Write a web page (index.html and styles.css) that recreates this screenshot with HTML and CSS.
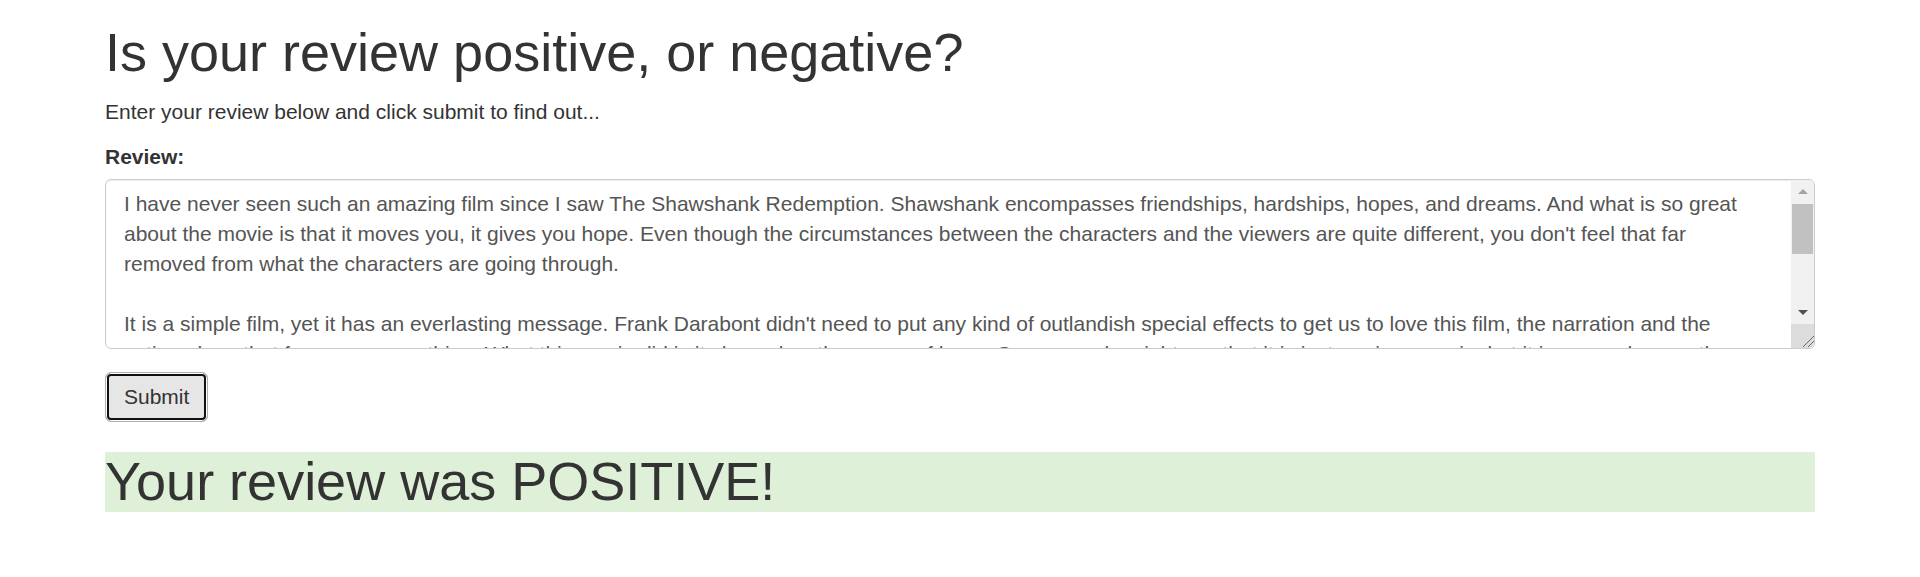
FILE: index.html
```html
<!DOCTYPE html>
<html lang="en">
<head>
<meta charset="utf-8">
<title>Sentiment Analysis</title>
<link rel="stylesheet" href="styles.css">
</head>
<body>
<div class="container">
  <h1 class="title">Is your review positive, or negative?</h1>
  <p class="lead-text">Enter your review below and click submit to find out...</p>
  <form class="review-form">
    <div class="form-group">
      <label class="field-label" for="review">Review:</label>
      <div class="field-wrap">
        <textarea id="review" class="form-control" rows="5">I have never seen such an amazing film since I saw The Shawshank Redemption. Shawshank encompasses friendships, hardships, hopes, and dreams. And what is so great about the movie is that it moves you, it gives you hope. Even though the circumstances between the characters and the viewers are quite different, you don't feel that far removed from what the characters are going through.

It is a simple film, yet it has an everlasting message. Frank Darabont didn't need to put any kind of outlandish special effects to get us to love this film, the narration and the acting alone that far surpass anything. What this movie did is it showed us the power of hope. Some people might say that it is just a prison movie, but it is so much more than that, and this film deserves its place at the top of IMDb's top 250 list.

The performances of Tim Robbins and Morgan Freeman are outstanding. Their friendship feels real from the very first scene to the very last, and you believe every word they say to each other.</textarea>
        <div class="scrollbar" aria-hidden="true">
          <div class="sb-button"><span class="arrow-up"></span></div>
          <div class="sb-track"><div class="sb-thumb"></div></div>
          <div class="sb-button"><span class="arrow-down"></span></div>
          <div class="sb-corner">
            <svg class="grip" width="24" height="24" viewBox="0 0 24 24">
              <line x1="12" y1="23" x2="23" y2="12" stroke="#6b6b6b" stroke-width="1"/>
              <line x1="17" y1="23" x2="23" y2="17" stroke="#6b6b6b" stroke-width="1"/>
            </svg>
          </div>
        </div>
      </div>
    </div>
    <button type="button" class="btn">Submit</button>
  </form>
  <h1 class="result">Your review was POSITIVE!</h1>
</div>
</body>
</html>
```

FILE: styles.css
```css
html, body {
  margin: 0;
  padding: 0;
  background: #fff;
}

body {
  font-family: "Liberation Sans", Arial, Helvetica, sans-serif;
  font-size: 21px;
  line-height: 1.42857;
  color: #333;
}

.container {
  width: 1710px;
  margin: 0 auto;
}

.title,
.result {
  font-family: "Liberation Sans", Arial, Helvetica, sans-serif;
  font-size: 54px;
  font-weight: 500;
  line-height: 1.1;
  color: #333;
  margin: 30px 0 15px;
}

.title {
  margin-top: 23px;
}

.lead-text {
  margin: 0 0 15px;
}

.form-group {
  margin-bottom: 23px;
}

.field-label {
  display: inline-block;
  max-width: 100%;
  margin-bottom: 7px;
  font-weight: 700;
}

.field-wrap {
  position: relative;
}

.form-control {
  display: block;
  box-sizing: border-box;
  width: 100%;
  height: 170px;
  padding: 9px 48px 9px 18px;
  font-family: "Liberation Sans", Arial, Helvetica, sans-serif;
  font-size: 21px;
  line-height: 1.42857;
  color: #555;
  background: #fff;
  border: 1px solid #ccc;
  border-radius: 6px;
  box-shadow: inset 0 1px 1px rgba(0, 0, 0, 0.075);
  resize: none;
  overflow: hidden;
  margin: 0;
}

.scrollbar {
  position: absolute;
  top: 1px;
  right: 1px;
  bottom: 1px;
  width: 23px;
  display: flex;
  flex-direction: column;
  background: #f1f1f1;
  border-radius: 0 5px 5px 0;
  overflow: hidden;
}

.sb-button {
  height: 23px;
  flex: none;
  display: flex;
  align-items: center;
  justify-content: center;
}

.arrow-up {
  width: 0;
  height: 0;
  border-left: 5px solid transparent;
  border-right: 5px solid transparent;
  border-bottom: 5px solid #a3a3a3;
}

.arrow-down {
  width: 0;
  height: 0;
  border-left: 5px solid transparent;
  border-right: 5px solid transparent;
  border-top: 5px solid #505050;
}

.sb-track {
  flex: 1;
  padding: 1px 1px 0;
}

.sb-thumb {
  height: 50px;
  background: #c1c1c1;
}

.sb-corner {
  height: 24px;
  flex: none;
  background: #dcdcdc;
  position: relative;
}

.grip {
  display: block;
}

.btn {
  display: inline-block;
  box-sizing: border-box;
  margin: 0;
  padding: 9px 18px;
  font-family: "Liberation Sans", Arial, Helvetica, sans-serif;
  font-size: 21px;
  line-height: 1.42857;
  color: #333;
  background: #e6e6e6;
  border: 1px solid #adadad;
  border-radius: 6px;
  box-shadow: inset 0 0 0 1px #fff, inset 0 0 0 3px #101010;
  cursor: pointer;
}

.result {
  background: #dff0d8;
  margin-bottom: 15px;
}
```
